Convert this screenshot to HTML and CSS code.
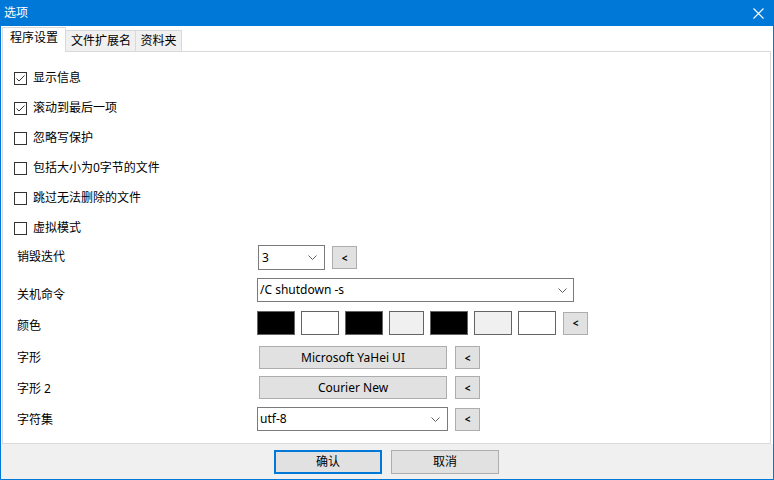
FILE: index.html
```html
<!DOCTYPE html>
<html lang="zh-CN">
<head>
<meta charset="utf-8">
<title>选项</title>
<link rel="stylesheet" href="styles.css">
</head>
<body>
<div class="window">
  <div class="titlebar">
    <span class="title">选项</span>
    <svg class="close" width="11" height="11" viewBox="0 0 11 11"><path d="M0.5 0.5 L10.5 10.5 M10.5 0.5 L0.5 10.5" stroke="#fff" stroke-width="1.1" fill="none"/></svg>
  </div>
  <div class="body">
    <div class="tabs">
      <div class="tab active t1">程序设置</div>
      <div class="tab t2">文件扩展名</div>
      <div class="tab t3">资料夹</div>
    </div>
    <div class="panel">
      <div class="checks">
        <div class="check"><span class="box"><svg width="11" height="11" viewBox="0 0 11 11"><polyline points="1.5,5.5 4,8 9.5,2.5" fill="none" stroke="#333" stroke-width="1"/></svg></span>显示信息</div>
        <div class="check"><span class="box"><svg width="11" height="11" viewBox="0 0 11 11"><polyline points="1.5,5.5 4,8 9.5,2.5" fill="none" stroke="#333" stroke-width="1"/></svg></span>滚动到最后一项</div>
        <div class="check"><span class="box"></span>忽略写保护</div>
        <div class="check"><span class="box"></span>包括大小为0字节的文件</div>
        <div class="check"><span class="box"></span>跳过无法删除的文件</div>
        <div class="check"><span class="box"></span>虚拟模式</div>
      </div>
      <div class="form">
        <div class="row r1">
          <span class="lbl m4">销毁迭代</span>
          <div class="combo c-iter"><span>3</span><svg class="chev" width="9" height="5" viewBox="0 0 9 5"><polyline points="0.5,0.5 4.5,4.5 8.5,0.5" fill="none" stroke="#606060"/></svg></div>
          <button class="mini gap7">&lt;</button>
        </div>
        <div class="row r2">
          <span class="lbl m9">关机命令</span>
          <div class="combo c-cmd"><span>/C shutdown -s</span><svg class="chev" width="9" height="5" viewBox="0 0 9 5"><polyline points="0.5,0.5 4.5,4.5 8.5,0.5" fill="none" stroke="#606060"/></svg></div>
        </div>
        <div class="row r3">
          <span class="lbl m7">颜色</span>
          <div class="swatches">
            <span class="sw black"></span>
            <span class="sw white"></span>
            <span class="sw black"></span>
            <span class="sw light narrow"></span>
            <span class="sw black"></span>
            <span class="sw light"></span>
            <span class="sw white"></span>
          </div>
          <button class="mini gap7">&lt;</button>
        </div>
        <div class="row r4">
          <span class="lbl m4">字形</span>
          <button class="fbtn">Microsoft YaHei UI</button>
          <button class="mini gap8">&lt;</button>
        </div>
        <div class="row r5">
          <span class="lbl m5">字形 2</span>
          <button class="fbtn">Courier New</button>
          <button class="mini gap8">&lt;</button>
        </div>
        <div class="row r6">
          <span class="lbl m5">字符集</span>
          <div class="combo c-cs"><span>utf-8</span><svg class="chev" width="9" height="5" viewBox="0 0 9 5"><polyline points="0.5,0.5 4.5,4.5 8.5,0.5" fill="none" stroke="#606060"/></svg></div>
          <button class="mini gap7">&lt;</button>
        </div>
      </div>
    </div>
    <div class="footer">
      <button class="btn primary">确认</button>
      <button class="btn">取消</button>
    </div>
  </div>
</div>
</body>
</html>
```

FILE: styles.css
```css
* { box-sizing: border-box; }

body {
  margin: 0;
  font-family: "Noto Sans", "Noto Sans CJK SC", sans-serif;
  font-size: 12px;
  color: #000;
  background: #fff;
}

.window {
  width: 774px;
  height: 480px;
  border: 1px solid #0078d7;
  display: flex;
  flex-direction: column;
  background: #fff;
}

.titlebar {
  height: 25px;
  flex: none;
  background: #0078d7;
  color: #fff;
  display: flex;
  align-items: center;
  justify-content: space-between;
  padding: 0 9px 1px 3px;
  line-height: 16px;
}

.close { display: block; }

.body {
  flex: 1;
  display: flex;
  flex-direction: column;
  padding-top: 1px;
  background: #fff;
}

.tabs {
  height: 24px;
  flex: none;
  display: flex;
  align-items: flex-end;
  padding-left: 1px;
}

.tab {
  height: 21px;
  line-height: 20px;
  text-align: center;
  background: #f0f0f0;
  border-top: 1px solid #d9d9d9;
  border-right: 1px solid #d9d9d9;
  white-space: nowrap;
}

.tab.active {
  height: 25px;
  margin-bottom: -1px;
  background: #fff;
  border: 1px solid #d9d9d9;
  border-bottom: none;
  position: relative;
  z-index: 1;
  line-height: 20px;
}

.t1 { width: 64px; }
.t2 { width: 70px; padding-left: 1px; }
.t3 { width: 46px; }

.panel {
  flex: 1;
  margin: 0 2px 0 1px;
  border: 1px solid #d9d9d9;
  background: #fff;
  padding: 11px 0 0 11px;
}

.check {
  display: flex;
  align-items: center;
  height: 30px;
  line-height: 16px;
}

.box {
  width: 13px;
  height: 13px;
  border: 1px solid #333;
  background: #fff;
  margin-right: 6px;
  align-self: flex-start;
  margin-top: 9px;
  flex: none;
}

.box svg { display: block; }

.row {
  display: flex;
  align-items: center;
}

.r1 { height: 25px; margin-top: 2px; }
.r2 { height: 24px; margin-top: 8px; }
.r3 { height: 24px; margin-top: 9px; }
.r4 { height: 23px; margin-top: 11px; }
.r5 { height: 23px; margin-top: 7px; }
.r6 { height: 24px; margin-top: 8px; }

.lbl {
  width: 243px;
  flex: none;
  padding-left: 3px;
  line-height: 16px;
  align-self: flex-start;
  white-space: nowrap;
}

.m4 { margin-top: 4px; }
.m5 { margin-top: 5px; }
.m7 { margin-top: 7px; }
.m9 { margin-top: 9px; }

.combo {
  display: flex;
  align-items: center;
  justify-content: space-between;
  border: 1px solid #7a7a7a;
  background: #fff;
  padding: 0 7px 0 2px;
  line-height: 16px;
  flex: none;
}

.chev { display: block; flex: none; }

.c-iter { width: 67px; height: 25px; margin-left: 1px; padding-left: 3px; }
.c-cmd { width: 317px; height: 24px; padding-right: 6px; }
.c-cs { width: 191px; height: 24px; }

.mini {
  width: 25px;
  height: 23px;
  flex: none;
  border: 1px solid #adadad;
  background: #e1e1e1;
  font-family: "Noto Sans", sans-serif;
  font-size: 10px;
  font-weight: bold;
  color: #000;
  padding: 0;
  line-height: 20px;
}

.gap7 { margin-left: 7px; }
.gap8 { margin-left: 8px; }

.swatches {
  display: flex;
  gap: 6px;
  flex: none;
}

.sw {
  width: 38px;
  height: 24px;
  border: 1px solid #646464;
}

.sw.black { background: #000; }
.sw.white { background: #fff; }
.sw.light { background: #f0f0f0; }
.sw.narrow { width: 35px; }

.fbtn {
  width: 188px;
  height: 23px;
  margin-left: 2px;
  flex: none;
  border: 1px solid #adadad;
  background: #e1e1e1;
  font-family: "Noto Sans", "Noto Sans CJK SC", sans-serif;
  font-size: 12px;
  color: #000;
  padding: 0;
  line-height: 20px;
}

.footer {
  height: 35px;
  flex: none;
  background: #f0f0f0;
  display: flex;
  justify-content: center;
  align-items: flex-start;
  padding-top: 6px;
  gap: 9px;
  padding-right: 1px;
}

.btn {
  width: 108px;
  height: 24px;
  border: 1px solid #adadad;
  background: #e1e1e1;
  font-family: "Noto Sans", "Noto Sans CJK SC", sans-serif;
  font-size: 12px;
  color: #000;
  padding: 0;
  line-height: 20px;
}

.btn.primary { border: 2px solid #0078d7; }
```
